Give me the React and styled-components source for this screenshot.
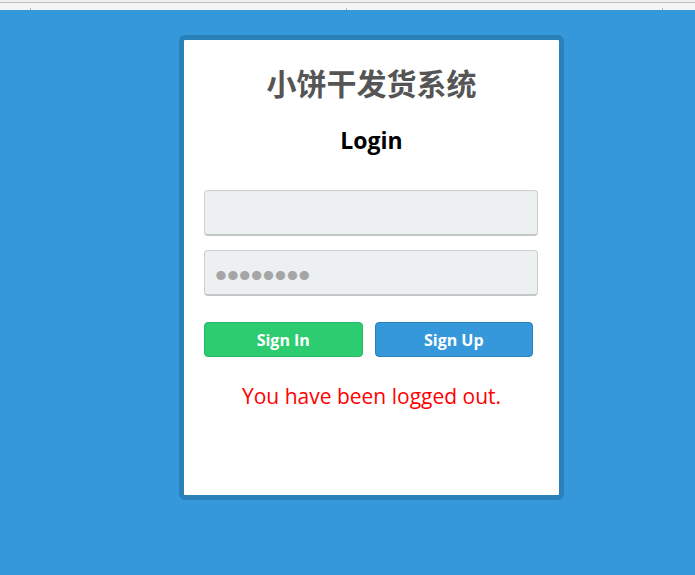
import React from 'react';
import styled, { createGlobalStyle } from 'styled-components';

const GlobalStyle = createGlobalStyle`
  html, body {
    margin: 0;
    padding: 0;
    background: #3498db;
    font-family: "Open Sans", "Noto Sans CJK SC", sans-serif;
  }
`;

const Page = styled.div`
  min-height: 575px;
  background: #3498db;
`;

const TopBar = styled.div`
  height: 10px;
  background: linear-gradient(#f0f0f0 0 2px, #c2c2c2 2px 3px, #f4f5f6 3px);
  display: flex;
  align-items: flex-end;
`;

const Tick = styled.span`
  width: 1px;
  height: 2px;
  background: #b5b5b5;
  margin-left: ${(p) => p.$left}px;
`;

const Content = styled.div`
  padding: 25px 0 0 179px;
`;

const Card = styled.div`
  width: 375px;
  height: 455px;
  background: #fff;
  border: 5px solid #2a80b9;
  border-radius: 6px;
  display: flex;
  flex-direction: column;
  align-items: center;
`;

const Title = styled.h1`
  margin: 22px 0 0;
  font-family: "Noto Sans CJK SC", sans-serif;
  font-size: 30px;
  font-weight: 700;
  color: #555555;
  line-height: 40px;
`;

const Subtitle = styled.h3`
  margin: 22px 0 0;
  font-size: 23px;
  font-weight: 700;
  color: #000;
  line-height: 32px;
`;

const Form = styled.form`
  align-self: flex-start;
  width: 334px;
  margin: 34px 0 0 20px;
  display: flex;
  flex-direction: column;
  gap: 14px;
`;

const Field = styled.input`
  box-sizing: border-box;
  width: 100%;
  height: 46px;
  padding: 6px 10px 0;
  background: #ecf0f1;
  border: 1px solid #cdd0d1;
  border-bottom: 2px solid #c4c7c8;
  border-radius: 4px;
  outline: none;
  font-family: "Liberation Sans", sans-serif;
  font-size: 34px;
  letter-spacing: 0;
  color: #a5a5a5;
`;

const Buttons = styled.div`
  display: flex;
  gap: 12px;
  margin-top: 12px;
  padding-right: 5px;
`;

const Button = styled.button`
  flex: 1;
  height: 35px;
  border-radius: 4px;
  border: 1px solid ${(p) => (p.$variant === 'green' ? '#27b863' : '#2a80b9')};
  background: ${(p) => (p.$variant === 'green' ? '#2ecc71' : '#3498db')};
  color: #fff;
  font-family: "Open Sans", sans-serif;
  font-size: 16px;
  font-weight: 700;
  cursor: pointer;
`;

const Message = styled.p`
  margin: 25px 0 0;
  color: #ff0000;
  font-size: 21px;
  line-height: 28px;
  text-align: center;
`;

export default function App() {
  return (
    <Page>
      <GlobalStyle />
      <TopBar>
        <Tick $left={30} />
        <Tick $left={315} />
        <Tick $left={315} />
      </TopBar>
      <Content>
        <Card>
          <Title>小饼干发货系统</Title>
          <Subtitle>Login</Subtitle>
          <Form onSubmit={(e) => e.preventDefault()}>
            <Field type="text" />
            <Field type="password" defaultValue="12345678" />
            <Buttons>
              <Button $variant="green" type="submit">Sign In</Button>
              <Button $variant="blue" type="button">Sign Up</Button>
            </Buttons>
          </Form>
          <Message>You have been logged out.</Message>
        </Card>
      </Content>
    </Page>
  );
}
